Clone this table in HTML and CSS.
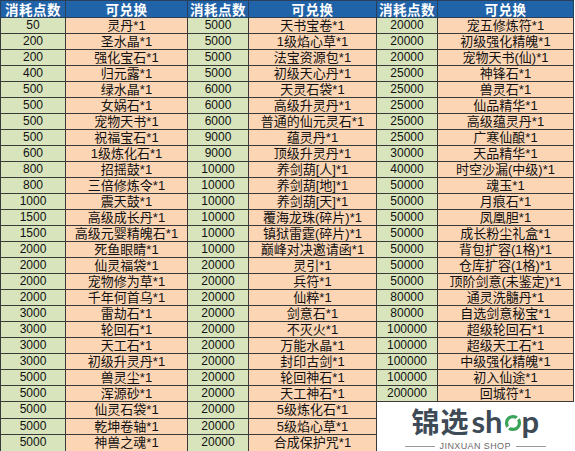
FILE: index.html
```html
<!DOCTYPE html>
<html lang="zh-CN">
<head>
<meta charset="utf-8">
<title>消耗点数兑换表</title>
<link rel="stylesheet" href="styles.css">
</head>
<body>
<table class="sheet">
<colgroup>
<col class="c-pts1"><col class="c-item1"><col class="c-pts2"><col class="c-item2"><col class="c-pts3"><col class="c-item3">
</colgroup>
<thead>
<tr class="head"><th>消耗点数</th><th>可兑换</th><th>消耗点数</th><th>可兑换</th><th>消耗点数</th><th>可兑换</th></tr>
</thead>
<tbody>
<tr><td class="p">50</td><td class="i">灵丹*1</td><td class="p">5000</td><td class="i">天书宝卷*1</td><td class="p">20000</td><td class="i">宠五修炼符*1</td></tr>
<tr><td class="p">200</td><td class="i">圣水晶*1</td><td class="p">5000</td><td class="i">1级焰心草*1</td><td class="p">20000</td><td class="i">初级强化精魄*1</td></tr>
<tr><td class="p">200</td><td class="i">强化宝石*1</td><td class="p">5000</td><td class="i">法宝资源包*1</td><td class="p">20000</td><td class="i">宠物天书(仙)*1</td></tr>
<tr><td class="p">400</td><td class="i">归元露*1</td><td class="p">5000</td><td class="i">初级天心丹*1</td><td class="p">25000</td><td class="i">神锋石*1</td></tr>
<tr><td class="p">500</td><td class="i">绿水晶*1</td><td class="p">6000</td><td class="i">天灵石袋*1</td><td class="p">25000</td><td class="i">兽灵石*1</td></tr>
<tr><td class="p">500</td><td class="i">女娲石*1</td><td class="p">6000</td><td class="i">高级升灵丹*1</td><td class="p">25000</td><td class="i">仙品精华*1</td></tr>
<tr><td class="p">500</td><td class="i">宠物天书*1</td><td class="p">6000</td><td class="i">普通的仙元灵石*1</td><td class="p">25000</td><td class="i">高级蕴灵丹*1</td></tr>
<tr><td class="p">500</td><td class="i">祝福宝石*1</td><td class="p">9000</td><td class="i">蕴灵丹*1</td><td class="p">25000</td><td class="i">广寒仙酿*1</td></tr>
<tr><td class="p">600</td><td class="i">1级炼化石*1</td><td class="p">9000</td><td class="i">顶级升灵丹*1</td><td class="p">30000</td><td class="i">天品精华*1</td></tr>
<tr><td class="p">800</td><td class="i">招摇鼓*1</td><td class="p">10000</td><td class="i">养剑葫[人]*1</td><td class="p">40000</td><td class="i">时空沙漏(中级)*1</td></tr>
<tr><td class="p">800</td><td class="i">三倍修炼令*1</td><td class="p">10000</td><td class="i">养剑葫[地]*1</td><td class="p">50000</td><td class="i">魂玉*1</td></tr>
<tr><td class="p">1000</td><td class="i">震天鼓*1</td><td class="p">10000</td><td class="i">养剑葫[天]*1</td><td class="p">50000</td><td class="i">月痕石*1</td></tr>
<tr><td class="p">1500</td><td class="i">高级成长丹*1</td><td class="p">10000</td><td class="i">覆海龙珠(碎片)*1</td><td class="p">50000</td><td class="i">凤凰胆*1</td></tr>
<tr><td class="p">1500</td><td class="i">高级元婴精魄石*1</td><td class="p">10000</td><td class="i">镇狱雷霆(碎片)*1</td><td class="p">50000</td><td class="i">成长粉尘礼盒*1</td></tr>
<tr><td class="p">2000</td><td class="i">死鱼眼睛*1</td><td class="p">10000</td><td class="i">巅峰对决邀请函*1</td><td class="p">50000</td><td class="i">背包扩容(1格)*1</td></tr>
<tr><td class="p">2000</td><td class="i">仙灵福袋*1</td><td class="p">20000</td><td class="i">灵引*1</td><td class="p">50000</td><td class="i">仓库扩容(1格)*1</td></tr>
<tr><td class="p">2000</td><td class="i">宠物修为草*1</td><td class="p">20000</td><td class="i">兵符*1</td><td class="p">50000</td><td class="i">顶阶剑意(未鉴定)*1</td></tr>
<tr><td class="p">2000</td><td class="i">千年何首乌*1</td><td class="p">20000</td><td class="i">仙粹*1</td><td class="p">80000</td><td class="i">通灵洗髓丹*1</td></tr>
<tr><td class="p">3000</td><td class="i">雷劫石*1</td><td class="p">20000</td><td class="i">剑意石*1</td><td class="p">80000</td><td class="i">自选剑意秘宝*1</td></tr>
<tr><td class="p">3000</td><td class="i">轮回石*1</td><td class="p">20000</td><td class="i">不灭火*1</td><td class="p">100000</td><td class="i">超级轮回石*1</td></tr>
<tr><td class="p">3000</td><td class="i">天工石*1</td><td class="p">20000</td><td class="i">万能水晶*1</td><td class="p">100000</td><td class="i">超级天工石*1</td></tr>
<tr><td class="p">3000</td><td class="i">初级升灵丹*1</td><td class="p">20000</td><td class="i">封印古剑*1</td><td class="p">100000</td><td class="i">中级强化精魄*1</td></tr>
<tr><td class="p">5000</td><td class="i">兽灵尘*1</td><td class="p">20000</td><td class="i">轮回神石*1</td><td class="p">100000</td><td class="i">初入仙途*1</td></tr>
<tr><td class="p">5000</td><td class="i">浑源砂*1</td><td class="p">20000</td><td class="i">天工神石*1</td><td class="p">200000</td><td class="i">回城符*1</td></tr>
<tr><td class="p">5000</td><td class="i">仙灵石袋*1</td><td class="p">20000</td><td class="i">5级炼化石*1</td>
<td class="logo-cell" colspan="2" rowspan="3">
<div class="logo">
<div class="brand"><span class="brand-cn">锦选</span><span class="brand-en">sh<svg class="o-leaf" viewBox="0 0 20 20" width="18" height="18"><circle cx="10" cy="10" r="7.2" fill="none" stroke="#3aa35a" stroke-width="3.6"/><path d="M3 17 L17 3" stroke="#ffffff" stroke-width="2.4"/></svg>p</span></div>
<div class="tag"><span class="rule"></span><span class="tag-text">JINXUAN SHOP</span><span class="rule"></span></div>
</div>
</td></tr>
<tr><td class="p">5000</td><td class="i">乾坤卷轴*1</td><td class="p">20000</td><td class="i">5级焰心草*1</td></tr>
<tr><td class="p">5000</td><td class="i">神兽之魂*1</td><td class="p">20000</td><td class="i">合成保护咒*1</td></tr>
</tbody>
</table>
</body>
</html>
```
FILE: styles.css
```css
html, body {
  margin: 0;
  padding: 0;
  background: #ffffff;
}
.sheet {
  border-collapse: collapse;
  table-layout: fixed;
  width: 573px;
  font-family: "Liberation Sans", "Noto Sans CJK SC", sans-serif;
  color: #111;
}
.c-pts1 { width: 65px; }
.c-item1 { width: 122px; }
.c-pts2 { width: 61px; }
.c-item2 { width: 128px; }
.c-pts3 { width: 61px; }
.c-item3 { width: 136px; }
.head th {
  height: 16px;
  padding: 0;
  background: #2163a8;
  color: #ffffff;
  font-family: "Noto Sans CJK SC", sans-serif;
  font-weight: 700;
  font-size: 13.5px;
  line-height: 16px;
  border: 1px solid #2a3f5a;
  text-align: center;
  letter-spacing: 0.5px;
}
td {
  height: 15px;
  padding: 0;
  border: 1px solid #3a3a3a;
  text-align: center;
  line-height: 15px;
  white-space: nowrap;
  overflow: hidden;
}
td.p {
  background: #d8e4bc;
  font-size: 12px;
}
td.i {
  background: #fcd5b4;
  font-size: 13px;
  font-family: "Liberation Sans", "Noto Sans CJK SC", sans-serif;
}
td.logo-cell {
  background: #ffffff;
  border: none;
  border-left: 1px solid #3a3a3a;
  border-top: 1px solid #3a3a3a;
  vertical-align: top;
  overflow: visible;
}
.logo {
  display: flex;
  flex-direction: column;
  align-items: center;
  padding-top: 4px;
}
.brand {
  display: flex;
  align-items: center;
  gap: 2px;
  color: #3e4a56;
  height: 30px;
}
.brand-cn {
  font-family: "Noto Sans CJK SC", sans-serif;
  font-weight: 700;
  font-size: 28px;
  line-height: 30px;
  letter-spacing: 1px;
}
.brand-en {
  display: flex;
  align-items: center;
  font-family: "Lato", "Liberation Sans", sans-serif;
  font-weight: 700;
  font-size: 31px;
  line-height: 30px;
  letter-spacing: 0;
}
.o-leaf {
  margin: 4px 0 0 1px;
}
.tag {
  display: flex;
  align-items: center;
  gap: 5px;
  margin-top: 6px;
}
.rule {
  width: 30px;
  height: 1px;
  background: #9a9a9a;
}
.tag-text {
  font-family: "Liberation Sans", sans-serif;
  font-size: 9px;
  line-height: 9px;
  color: #6a6a6a;
  letter-spacing: 0.4px;
}
```
